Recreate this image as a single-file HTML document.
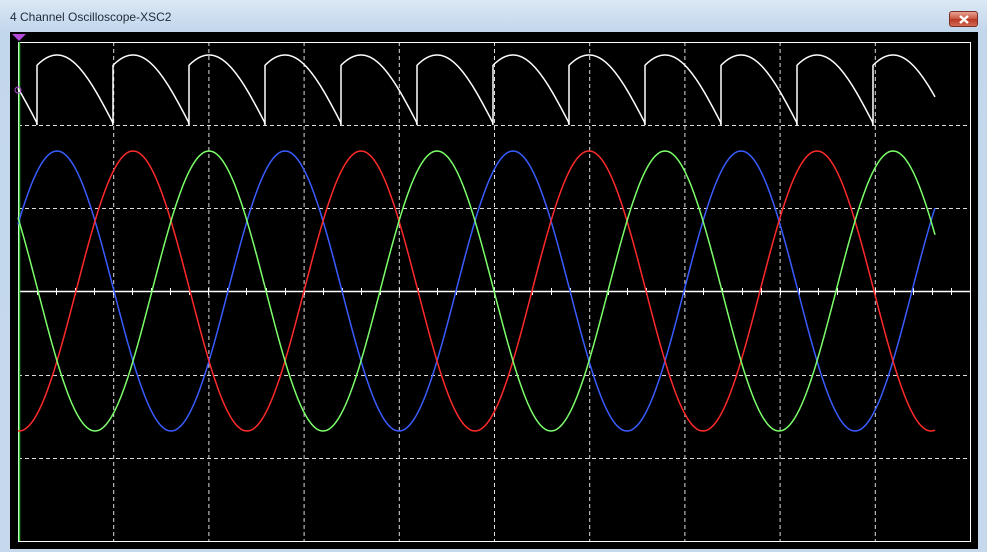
<!DOCTYPE html>
<html><head><meta charset="utf-8"><style>
html,body{margin:0;padding:0;width:987px;height:552px;overflow:hidden;background:#c9dcee;}
#win{position:absolute;left:0;top:0;width:987px;height:552px;background:linear-gradient(#dbe8f5,#c3d7ec 30px,#c6d9ec);}
#title{position:absolute;left:10px;top:10px;font:12px "Liberation Sans",sans-serif;color:#1e2a3a;}
#close{position:absolute;left:949px;top:11px;width:29px;height:16px;border-radius:3px;border:1px solid #7a2e24;background:linear-gradient(#e8a294,#c9543f 50%,#b83a26 51%,#d26a50);box-sizing:border-box;}
#close svg{position:absolute;left:8px;top:3px}
svg#scope{position:absolute;left:10px;top:32px;}
</style></head><body>
<div id="win">
<div id="title">4 Channel Oscilloscope-XSC2</div>
<div id="close"><svg width="12" height="9"><path d="M2 1L10 8M10 1L2 8" stroke="#fff" stroke-width="2.4"/></svg></div>
<svg id="scope" width="968" height="517" viewBox="10 32 968 517">
<rect x="10" y="32" width="968" height="517" fill="#000"/>
<g id="grid" stroke="#ddd" stroke-width="1" stroke-dasharray="4,3"></g>
<rect x="18.5" y="42.5" width="952" height="499" fill="none" stroke="#fff" stroke-width="1"/>
<line x1="18" y1="291.5" x2="970" y2="291.5" stroke="#fff" stroke-width="1.5"/>
<g id="ticks" stroke="#fff" stroke-width="1"></g>
<line x1="19.5" y1="42" x2="19.5" y2="541" stroke="#2ec52e" stroke-width="1.5"/>
<path id="pb" fill="none" stroke="#3a5cff" stroke-width="1.5"/>
<path id="pr" fill="none" stroke="#ff2a2a" stroke-width="1.5"/>
<path id="pg" fill="none" stroke="#7cff6a" stroke-width="1.5"/>
<path id="pw" fill="none" stroke="#ffffff" stroke-width="1.5"/>
<polygon points="12,34 26,34 19,41" fill="#b44ad8"/>
<circle cx="18" cy="90" r="3" fill="none" stroke="#b44ad8"/>
</svg>
</div>
<script>
var g=document.getElementById('grid'),t=document.getElementById('ticks'),s='';
for(var i=1;i<10;i++){var x=18+95.2*i+0.5;s+='<line x1="'+x+'" y1="42" x2="'+x+'" y2="541"/>';}
for(var j=1;j<6;j++){if(j==3)continue;var y=Math.round(42+83.2*j)+0.5;s+='<line x1="18" y1="'+y+'" x2="970" y2="'+y+'"/>';}
g.innerHTML=s;s='';
for(var k=0;k<=50;k++){var x=Math.round(18+19.04*k)+0.5;s+='<line x1="'+x+'" y1="288" x2="'+x+'" y2="295"/>';}
t.innerHTML=s;
function sine(pk){var d='';for(var x=18;x<=935;x+=1){var y=291-140*Math.cos(2*Math.PI*(x-pk)/228);d+=(x==18?'M':'L')+x+' '+y.toFixed(1);}return d;}
document.getElementById('pb').setAttribute('d',sine(57));
document.getElementById('pr').setAttribute('d',sine(133));
document.getElementById('pg').setAttribute('d',sine(209));
var d='',prev=null;
for(var x=18;x<=935;x+=0.5){var ph=((x-37)%76+76)%76;var u=ph-20;var y=125-70*Math.cos(2*Math.PI*u/228);
if(prev!==null&&ph<prev){d+='L'+x+' 125';}
d+=(d?'L':'M')+x+' '+y.toFixed(1);prev=ph;}
document.getElementById('pw').setAttribute('d',d);
</script>
</body></html>
